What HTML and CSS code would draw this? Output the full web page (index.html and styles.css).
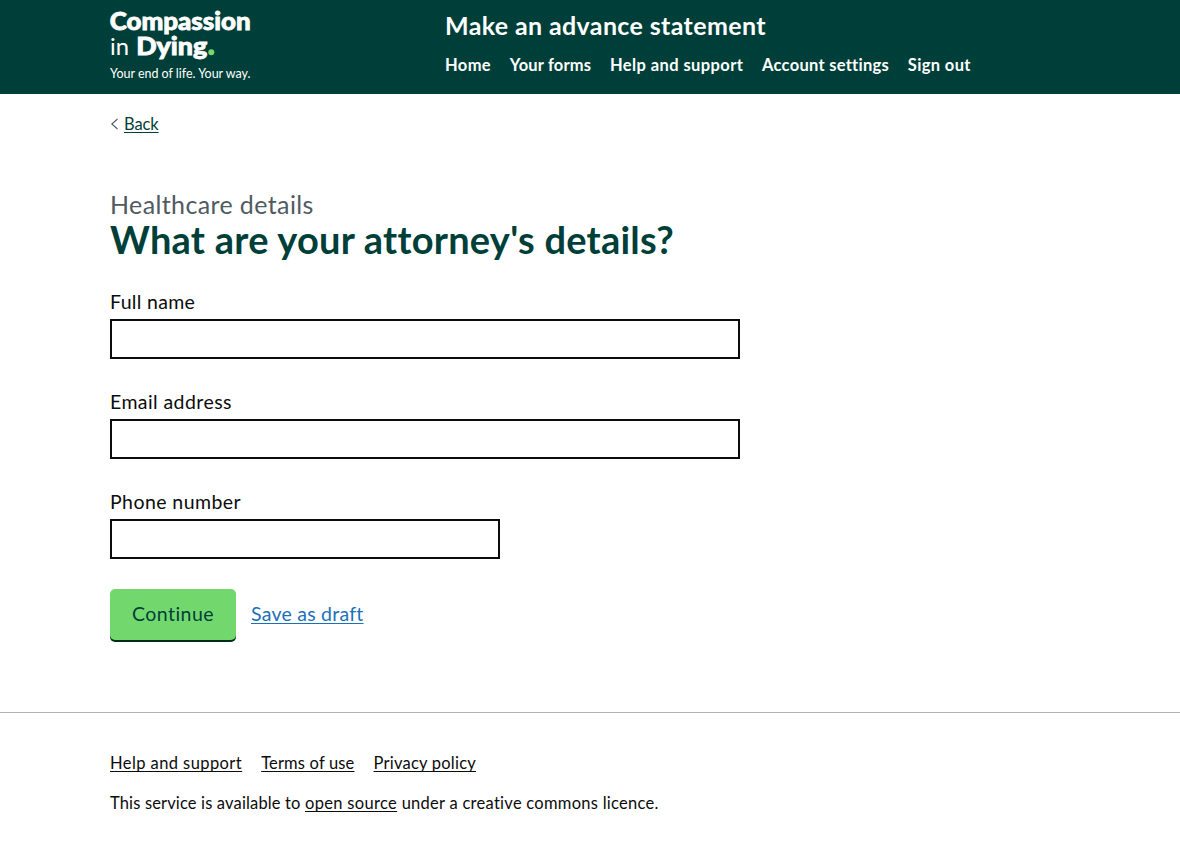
FILE: index.html
```html
<!DOCTYPE html>
<html lang="en">
<head>
<meta charset="utf-8">
<title>What are your attorney's details?</title>
<link rel="stylesheet" href="styles.css">
</head>
<body>
<header class="header">
  <div class="container header-row">
    <a class="logo" href="#" aria-label="Compassion in Dying">
      <svg width="146" height="78" viewBox="0 0 146 78">
        <g fill="#fff">
          <text class="logo-bold" x="-0.3" y="22" textLength="141" lengthAdjust="spacingAndGlyphs">Compassion</text>
          <text class="logo-light" x="0" y="47" textLength="19" lengthAdjust="spacingAndGlyphs">in</text>
          <text class="logo-bold" x="26.2" y="47" textLength="71" lengthAdjust="spacingAndGlyphs">Dying</text>
          <text class="logo-tag" x="0" y="69.5" textLength="140.5" lengthAdjust="spacingAndGlyphs">Your end of life. Your way.</text>
        </g>
        <circle cx="101.3" cy="44.2" r="3" fill="#72d86e"/>
      </svg>
    </a>
    <div class="header-content">
      <a class="service-name" href="#">Make an advance statement</a>
      <nav class="nav">
        <a class="nav-home" href="#">Home</a>
        <a class="nav-forms" href="#">Your forms</a>
        <a class="nav-help" href="#">Help and support</a>
        <a class="nav-account" href="#">Account settings</a>
        <a class="nav-out" href="#">Sign out</a>
      </nav>
    </div>
  </div>
</header>
<div class="container">
  <div class="back-row">
    <svg class="chevron" width="8" height="12" viewBox="0 0 8 12"><path d="M7.5 1 1.8 6l5.7 5" fill="none" stroke="#505a5f" stroke-width="1.1"/></svg>
    <a class="back" href="#">Back</a>
  </div>
  <main class="main">
    <span class="caption">Healthcare details</span>
    <h1 class="heading">What are your attorney's details?</h1>
    <form>
      <div class="group">
        <label class="label label-name" for="name">Full name</label>
        <input class="input" id="name" type="text">
      </div>
      <div class="group">
        <label class="label label-email" for="email">Email address</label>
        <input class="input" id="email" type="email">
      </div>
      <div class="group">
        <label class="label label-phone" for="phone">Phone number</label>
        <input class="input input-short" id="phone" type="tel">
      </div>
      <div class="actions">
        <button class="button" type="button">Continue</button>
        <a class="draft" href="#">Save as draft</a>
      </div>
    </form>
  </main>
</div>
<footer class="footer">
  <div class="container">
    <div class="footer-links">
      <a class="foot-help" href="#">Help and support</a>
      <a class="foot-terms" href="#">Terms of use</a>
      <a class="foot-privacy" href="#">Privacy policy</a>
    </div>
    <p class="licence">This service is available to <a href="#">open source</a><span class="licence-end"> under a creative commons licence.</span></p>
  </div>
</footer>
</body>
</html>
```

FILE: styles.css
```css
* { box-sizing: border-box; }
body {
  margin: 0;
  background: #fff;
  color: #0b0c0c;
  font: 16.5px/20px Lato, sans-serif;
  font-variant-ligatures: none;
}
a { color: inherit; text-underline-offset: 2px; text-decoration-thickness: 1px; text-decoration-skip-ink: none; }
.container { width: 960px; margin: 0 auto; }
.header { height: 94px; background: #003f39; color: #fff; }
.header a { text-decoration: none; }
.header-row { display: flex; padding-top: 8px; }
.logo { width: 335px; height: 78px; }
.logo svg { display: block; overflow: visible; }
.logo-bold { font: 900 24px Lato, sans-serif; stroke: #fff; stroke-width: 0.8px; }
.logo-light { font: 400 24px Lato, sans-serif; }
.logo-tag { font: 400 12.5px Lato, sans-serif; }
.header-content { display: flex; flex-direction: column; align-items: flex-start; }
.service-name { font-size: 25px; line-height: 30px; font-weight: 700; padding-top: 2px; letter-spacing: 0.37px; }
.nav { display: flex; gap: 18.7px; margin-top: 15px; font-weight: 700; white-space: nowrap; }
.nav-home { letter-spacing: 0.35px; }
.nav-forms { letter-spacing: 0.18px; }
.nav-help { letter-spacing: 0.4px; }
.nav-account { letter-spacing: 0.28px; }
.nav-out { letter-spacing: 0.35px; }
.back-row { display: flex; align-items: center; gap: 6px; padding-top: 20px; color: #003f39; }
.back { letter-spacing: -0.1px; }
.main { padding-top: 55px; }
.caption { display: block; font-size: 25px; line-height: 30px; color: #505a5f; letter-spacing: 0.38px; }
.heading { margin: 0; font-size: 38px; line-height: 40px; font-weight: 700; color: #003f39; white-space: nowrap; letter-spacing: 0.25px; }
.group { margin-bottom: 30px; }
form { padding-top: 30px; }
.label { display: block; font-size: 19.5px; line-height: 25px; margin-bottom: 5px; }
.label-name { letter-spacing: 0.33px; }
.label-email { letter-spacing: 0.42px; }
.label-phone { letter-spacing: 0.43px; }
.input { display: block; width: 630px; height: 40px; border: 2px solid #0b0c0c; border-radius: 0; padding: 5px; background: #fff; }
.input-short { width: 389.5px; }
.actions { display: flex; align-items: center; gap: 15px; }
.button { width: 126px; height: 51px; border: 0; border-radius: 5px; background: #72d86e; color: #003f39; box-shadow: 0 2px 0 #002d18; font: 19.5px/25px Lato, sans-serif; padding: 0 0 2px; letter-spacing: 0.45px; }
.draft { font-size: 19.5px; line-height: 25px; color: #1d70b8; letter-spacing: 0.24px; padding-bottom: 2px; }
.footer { margin-top: 72px; border-top: 1px solid #b1b4b6; padding-top: 40px; }
.footer-links { display: flex; gap: 19px; }
.foot-help { letter-spacing: 0.42px; }
.foot-terms { letter-spacing: 0.17px; }
.foot-privacy { letter-spacing: 0.23px; }
.licence { margin: 20px 0 0; letter-spacing: 0.15px; }
.licence a { letter-spacing: 0.33px; }
.licence-end { letter-spacing: 0.27px; }
```
